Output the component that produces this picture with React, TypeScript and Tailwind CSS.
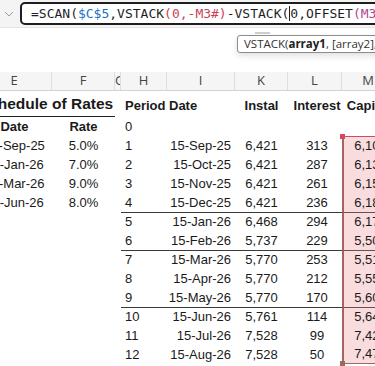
import clsx from "clsx";

type CellProps = {
  w: string;
  className?: string;
  children?: React.ReactNode;
};

function Cell({ w, className, children }: CellProps) {
  return (
    <div className={clsx("relative flex h-full shrink-0 items-center whitespace-nowrap", w, className)}>
      {children}
    </div>
  );
}

const rates = [
  ["15-Sep-25", "5.0%"],
  ["15-Jan-26", "7.0%"],
  ["15-Mar-26", "9.0%"],
  ["15-Jun-26", "8.0%"],
];

const schedule = [
  { p: 1, d: "15-Sep-25", i: "6,421", n: "313", c: "6,108" },
  { p: 2, d: "15-Oct-25", i: "6,421", n: "287", c: "6,134" },
  { p: 3, d: "15-Nov-25", i: "6,421", n: "261", c: "6,159" },
  { p: 4, d: "15-Dec-25", i: "6,421", n: "236", c: "6,185" },
  { p: 5, d: "15-Jan-26", i: "6,468", n: "294", c: "6,174" },
  { p: 6, d: "15-Feb-26", i: "5,737", n: "229", c: "5,508" },
  { p: 7, d: "15-Mar-26", i: "5,770", n: "253", c: "5,517" },
  { p: 8, d: "15-Apr-26", i: "5,770", n: "212", c: "5,558" },
  { p: 9, d: "15-May-26", i: "5,770", n: "170", c: "5,600" },
  { p: 10, d: "15-Jun-26", i: "5,761", n: "114", c: "5,647" },
  { p: 11, d: "15-Jul-26", i: "7,528", n: "99", c: "7,429" },
  { p: 12, d: "15-Aug-26", i: "7,528", n: "50", c: "7,478" },
];

// periods that start a new rate block get a rule above them
const breaks = [5, 7, 10];

const letters: [string, string][] = [
  ["w-[75px]", "E"],
  ["w-[63px]", "F"],
  ["w-[6px]", "G"],
  ["w-[46px]", "H"],
  ["w-[68px]", "I"],
  ["w-[53px]", "K"],
  ["w-[54px]", "L"],
  ["w-[53px]", "M"],
];

export default function App() {
  return (
    <div className="relative h-[366px] w-[375px] overflow-hidden bg-white font-['Liberation_Sans',Arial,sans-serif] text-[13px] text-[#1a1a1a]">
      {/* Formula bar */}
      <div className="flex h-[28px] items-start border-b border-[#e4e4e4] bg-[#f4f4f4]">
        <div className="flex h-[27px] w-[20px] shrink-0 items-center justify-center">
          <svg width="10" height="6" viewBox="0 0 10 6" className="ml-[-3px]">
            <polyline points="1,1 5,5 9,1" fill="none" stroke="#9a9a9a" strokeWidth="1" />
          </svg>
        </div>
        <div className="mt-[2px] flex h-[23px] w-[400px] shrink-0 items-center rounded-[5px] border-2 border-[#1e1e1e] bg-white pl-[9px] font-['DejaVu_Sans_Mono',monospace] text-[13px] whitespace-nowrap text-[#1f1f1f]">
          <span>=SCAN(</span>
          <span className="text-[#1d6fc4]">$C$5</span>
          <span>,VSTACK</span>
          <span className="text-[#cf3f52]">(0,-M3#)</span>
          <span>-VSTACK(</span>
          <span className="inline-block h-[15px] w-px bg-[#222]" />
          <span>0,OFFSET</span>
          <span className="text-[#b0458f]">(M3#</span>
        </div>
      </div>

      {/* Gap above the sheet, with the function tooltip over it */}
      <div className="h-[44px]" />
      <div className="absolute left-[255px] top-[32px] h-[2px] w-[15px] bg-[#cfcfcf]" />
      <div className="absolute left-[237px] top-[35px] flex h-[18px] items-center rounded-[3px] border border-[#8c8c8c] bg-white pl-[6px] pr-[8px] font-['Open_Sans',sans-serif] text-[11.5px] whitespace-nowrap text-[#333] shadow-[0_3px_6px_rgba(0,0,0,0.12)]">
        VSTACK(<b className="font-bold text-[#222]">array1</b>, [array2], ...)
      </div>

      {/* Sheet */}
      <div className="ml-[-23px] flex w-[420px] flex-col">
        {/* Column letters */}
        <div className="flex h-[19px] border-b border-[#d2d2d2] bg-[#f5f5f5] font-['Open_Sans',sans-serif] text-[13px] text-[#444]">
          {letters.map(([w, l]) => (
            <Cell
              key={l}
              w={w}
              className={clsx("overflow-hidden border-r border-[#dedede]", l === "G" ? "justify-start" : "justify-center")}
            >
              {l}
            </Cell>
          ))}
        </div>

        {/* Titles */}
        <div className="flex h-[26px] font-bold">
          <Cell w="w-[138px]" className="justify-center border-b border-[#222] pt-[1px] text-[15.5px]">
            Schedule of Rates
          </Cell>
          <Cell w="w-[6px]" />
          <Cell w="w-[46px]" className="pl-[4px] pt-[3px]">Period</Cell>
          <Cell w="w-[68px]" className="pl-[2px] pt-[3px]">Date</Cell>
          <Cell w="w-[53px]" className="justify-center pt-[3px]">Instal</Cell>
          <Cell w="w-[54px]" className="justify-center pl-[4px] pt-[3px]">Interest</Cell>
          <Cell w="w-[53px]" className="justify-center pt-[3px]">Capital</Cell>
        </div>

        {/* Row 0 */}
        <div className="flex h-[19px]">
          <Cell w="w-[75px]" className="justify-center font-bold">Date</Cell>
          <Cell w="w-[63px]" className="justify-center font-bold">Rate</Cell>
          <Cell w="w-[6px]" />
          <Cell w="w-[46px]" className="pl-[4px]">0</Cell>
        </div>

        {schedule.map((r, idx) => {
          const rule = breaks.includes(r.p);
          const rate = rates[idx];
          return (
            <div key={r.p} className="flex h-[19px]">
              <Cell w="w-[75px]" className="justify-center">{rate?.[0]}</Cell>
              <Cell w="w-[63px]" className="justify-center">{rate?.[1]}</Cell>
              <Cell w="w-[6px]" />
              <Cell w="w-[46px]" className={clsx("pl-[4px]", rule && "border-t border-[#3a3a3a]")}>
                {r.p}
              </Cell>
              <Cell w="w-[68px]" className={clsx("justify-end pr-[4px]", rule && "border-t border-[#3a3a3a]")}>
                {r.d}
              </Cell>
              <Cell w="w-[53px]" className={clsx("justify-center", rule && "border-t border-[#3a3a3a]")}>
                {r.i}
              </Cell>
              <Cell w="w-[54px]" className={clsx("justify-center pl-[4px]", rule && "border-t border-[#3a3a3a]")}>
                {r.n}
              </Cell>
              <Cell
                w="w-[53px]"
                className={clsx(
                  "justify-center border-l-2 border-l-[#a8625f] bg-[#f9dcdd] pl-[2px]",
                  rule && "border-t border-t-[#6b5050]",
                  r.p === 1 && "border-t border-t-[#d24b5c]",
                  r.p === 12 && "border-b border-b-[#9c6a5c]"
                )}
              >
                {r.c}
                {r.p === 1 && <span className="absolute left-[-4px] top-[-3px] h-[5px] w-[5px] bg-[#d24b5c]" />}
                {r.p === 12 && <span className="absolute bottom-[-3px] left-[-4px] h-[5px] w-[5px] bg-[#9c6a5c]" />}
              </Cell>
            </div>
          );
        })}
      </div>
    </div>
  );
}
